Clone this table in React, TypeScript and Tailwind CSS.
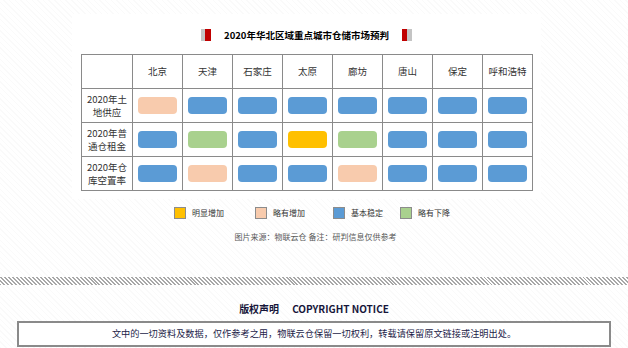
const cities = ["北京", "天津", "石家庄", "太原", "廊坊", "唐山", "保定", "呼和浩特"];

const colors: Record<string, string> = {
  y: "bg-[#ffc000]",
  p: "bg-[#f8cbad]",
  b: "bg-[#5b9bd5]",
  g: "bg-[#a9d18e]",
};

const rows = [
  { label: ["2020年土", "地供应"], cells: ["p", "b", "b", "b", "b", "b", "b", "b"] },
  { label: ["2020年普", "通仓租金"], cells: ["b", "g", "b", "y", "g", "b", "b", "b"] },
  { label: ["2020年仓", "库空置率"], cells: ["b", "p", "b", "b", "p", "b", "b", "b"] },
];

const legend = [
  { c: "y", text: "明显增加", w: "w-[81px]" },
  { c: "p", text: "略有增加", w: "w-[78px]" },
  { c: "b", text: "基本稳定", w: "w-[67px]" },
  { c: "g", text: "略有下降", w: "w-[60px]" },
];

export default function App() {
  return (
    <div className="w-[628px] h-[348px] overflow-hidden bg-[repeating-linear-gradient(45deg,#fafafa_0_1px,#ffffff_1px_4px)] font-['Noto_Sans_CJK_SC',sans-serif]">
      {/* chart image */}
      <div className="mt-[14px] ml-[72px] w-[469px] bg-white pt-[15px] pb-[8px]">
        <div className="flex items-center justify-center h-[12px]">
          <div className="flex h-[12px]">
            <span className="w-[4px] bg-[#c4c4c4]" />
            <span className="w-[6px] bg-[#c00000]" />
          </div>
          <div className="mx-[13px] text-[9.5px] font-bold leading-[12px] text-black">2020年华北区域重点城市仓储市场预判</div>
          <div className="flex h-[12px]">
            <span className="w-[5px] bg-[#c00000]" />
            <span className="w-[5px] bg-[#c4c4c4]" />
          </div>
        </div>

        <div className="mt-[13px] ml-[9px] grid w-[452px] grid-cols-[51px_repeat(8,50px)] border-t border-l border-[#8a8a8a] text-[9.5px] text-[#333]">
          <div className="h-[34px] border-r border-b border-[#8a8a8a]" />
          {cities.map((c) => (
            <div key={c} className="h-[34px] flex items-center justify-center border-r border-b border-[#8a8a8a]">
              {c}
            </div>
          ))}
          {rows.map((r, i) => (
            <div key={i} className="contents">
              <div className="h-[34px] flex flex-col items-center justify-center leading-[13px] border-r border-b border-[#8a8a8a]">
                <span>{r.label[0]}</span>
                <span>{r.label[1]}</span>
              </div>
              {r.cells.map((c, j) => (
                <div key={j} className="h-[34px] flex items-center justify-center border-r border-b border-[#8a8a8a]">
                  <div className={`w-[39px] h-[17px] rounded-[4px] ${colors[c]}`} />
                </div>
              ))}
            </div>
          ))}
        </div>
      </div>

      {/* legend */}
      <div className="mt-[8px] ml-[174px] flex h-[12px] items-center">
        {legend.map((l) => (
          <div key={l.text} className={`flex items-center gap-[6px] ${l.w}`}>
            <span className={`w-[12px] h-[12px] border border-[#8c8c8c] ${colors[l.c]}`} />
            <span className="text-[8px] leading-[12px] text-[#333]">{l.text}</span>
          </div>
        ))}
      </div>
      <div className="mt-[12px] text-center text-[8px] leading-[12px] text-[#595959] pl-[3px]">
        图片来源：物联云仓 备注：研判信息仅供参考
      </div>

      {/* divider */}
      <div className="mt-[34px] h-[8px] bg-[repeating-linear-gradient(45deg,#a8a8a8_0_1.4px,#ffffff_1.4px_2.8px)]" />

      {/* copyright */}
      <div className="mt-[17px] flex justify-center gap-[13px] text-[10px] font-bold leading-[14px] text-[#16163a]">
        <span>版权声明</span>
        <span>COPYRIGHT NOTICE</span>
      </div>
      <div className="mt-[5px] mx-[17px] h-[26px] border-2 border-[#8a8a8a] bg-white flex items-center justify-center text-[9.2px] text-[#1c1c48]">
        文中的一切资料及数据，仅作参考之用，物联云仓保留一切权利，转载请保留原文链接或注明出处。
      </div>
    </div>
  );
}
